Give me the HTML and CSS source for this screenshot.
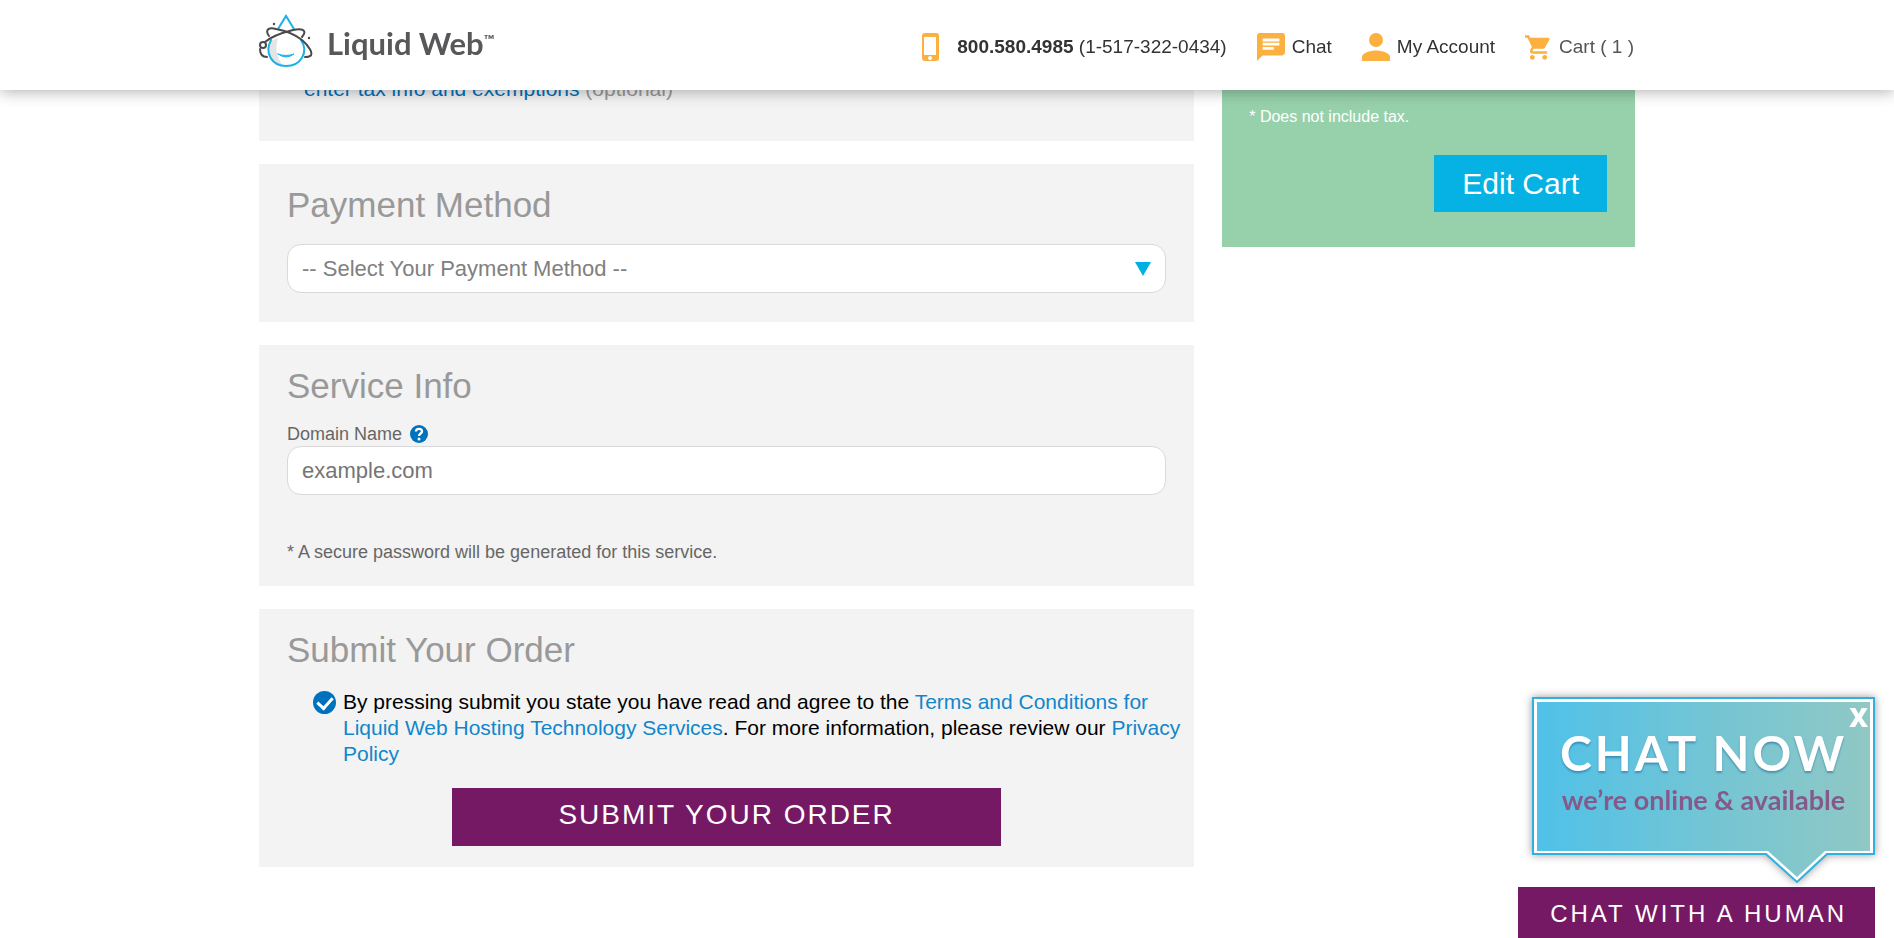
FILE: index.html
```
<!DOCTYPE html>
<html lang="en">
<head>
    <meta charset="UTF-8">
    <title>Liquid Web - Checkout</title>
    <link rel="stylesheet" href="styles.css">
</head>
<body>
    <header id="head">
        <div class="headMain">
            <a class="logo" href="#">
                <svg class="logoMark" viewBox="0 0 54 54" fill="none" stroke-linecap="round">
                    <path d="M12 27 C7 37 12 49 25 52 C17 44 16 34 19 24Z" fill="#e3e4e5"/>
                    <path d="M19 15 L27 2 L35 15" stroke="#1bb1e7" stroke-width="2"/>
                    <path d="M12 26 C5 39 13 52 27 52 C42 52 50 38 42 26" stroke="#1bb1e7" stroke-width="2"/>
                    <path d="M19 40 Q27 46 35 40 Q27 43 19 40Z" fill="#1bb1e7" stroke="#1bb1e7"/>
                    <path d="M10 22 C5 15 11 13 17 15 C28 17 38 22 43 26 C50 32 55 40 51 42 C50 43 48 43 46 43" stroke="#4a4a4c" stroke-width="2"/>
                    <path d="M6 28 C13 22 26 18 34 16 C43 14 49 16 43 23" stroke="#4a4a4c" stroke-width="2"/>
                    <path d="M1 35 C1 40 3 43 8 43" stroke="#4a4a4c" stroke-width="2"/>
                    <circle cx="4" cy="31" r="3" stroke="#4a4a4c" stroke-width="2" fill="#fff"/>
                    <circle cx="15" cy="10" r="1.200" fill="#4a4a4c"/>
                    <circle cx="50" cy="24" r="1.200" fill="#4a4a4c"/>
                </svg>
                <span class="logoText">Liquid Web<sup>™</sup></span>
            </a>
            <nav class="nav">
                <a class="phone" href="#">
                    <svg width="17" height="28" viewBox="0 0 17 28"><path fill="#fbb040" fill-rule="evenodd" d="M3 0h11a3 3 0 0 1 3 3v22a3 3 0 0 1-3 3H3a3 3 0 0 1-3-3V3a3 3 0 0 1 3-3zM2 4v18h12V4zM8 23a2 2 0 1 0 .1 0z"/></svg>
                    <span><b>800.580.4985</b> (1-517-322-0434)</span>
                </a>
                <a href="#">
                    <svg width="28" height="28" viewBox="2 2 20 20"><path fill="#fbb040" d="M20 2H4c-1.100 0-1.990.9-1.990 2L2 22l4-4h14c1.100 0 2-.9 2-2V4c0-1.100-.9-2-2-2zM6 9h12v2H6V9zm8 5H6v-2h8v2zm4-6H6V6h12v2z"/></svg>
                    <span>Chat</span>
                </a>
                <a href="#">
                    <svg width="28" height="28" viewBox="0 0 28 28"><circle cx="14" cy="7" r="7" fill="#fbb040"/><path fill="#fbb040" d="M0 28v-4c0-4 8-6.500 14-6.500s14 2.500 14 6.500v4z"/></svg>
                    <span>My Account</span>
                </a>
                <a class="cart" href="#">
                    <svg width="25" height="25" viewBox="1 2 20.300 20"><path fill="#fbb040" d="M7 18c-1.100 0-1.990.9-1.990 2S5.900 22 7 22s2-.9 2-2-.9-2-2-2zM1 2v2h2l3.600 7.590-1.350 2.450c-.16.28-.25.61-.25.96 0 1.100.9 2 2 2h12v-2H7.420c-.14 0-.25-.11-.25-.25l.03-.12.9-1.630h7.450c.75 0 1.410-.41 1.750-1.030l3.580-6.490c.08-.14.12-.31.12-.48 0-.55-.45-1-1-1H5.210l-.94-2H1zm16 16c-1.100 0-1.990.9-1.990 2s.89 2 1.990 2 2-.9 2-2-.9-2-2-2z"/></svg>
                    <span>Cart ( 1 )</span>
                </a>
            </nav>
        </div>
    </header>

    <div class="wrap">
        <main class="main">
            <section class="box boxTax">
                <p><a href="#">enter tax info and exemptions</a> (optional)</p>
            </section>

            <section class="box">
                <h2>Payment Method</h2>
                <div class="selectWrap">
                    <select class="field" aria-label="Payment Method">
                        <option>-- Select Your Payment Method --</option>
                    </select>
                </div>
            </section>

            <section class="box boxService">
                <h2>Service Info</h2>
                <div class="labelRow">
                    <label for="domain">Domain Name</label>
                    <button class="help" type="button" aria-label="Help">
                        <svg width="18" height="18" viewBox="0 0 18 18"><circle cx="9" cy="9" r="9" fill="#0071bc"/><path d="M6 6.500C6 3 12 3 12 6.500 12 8.500 9 8.500 9 11" fill="none" stroke="#fff" stroke-width="2.400"/><circle cx="9" cy="14" r="1.500" fill="#fff"/></svg>
                    </button>
                </div>
                <input class="field" id="domain" type="text" placeholder="example.com">
                <p class="note">* A secure password will be generated for this service.</p>
            </section>

            <section class="box boxSubmit">
                <h2>Submit Your Order</h2>
                <div class="terms">
                    <input type="checkbox" id="agree" checked>
                    <label for="agree">By pressing submit you state you have read and agree to the <a href="#">Terms and Conditions for Liquid Web Hosting Technology Services</a>. For more information, please review our <a href="#">Privacy Policy</a></label>
                </div>
                <button class="submit" type="button">SUBMIT YOUR ORDER</button>
            </section>
        </main>

        <aside class="side">
            <p>* per month</p>
            <p>* Does not include tax.</p>
            <button class="edit" type="button">Edit Cart</button>
        </aside>
    </div>

    <div class="chat">
        <div class="bubble">
            <svg class="bubbleShape" viewBox="0 0 343 187">
                <defs>
                    <linearGradient id="bubbleFill">
                        <stop offset="0" stop-color="#50c1e8"/>
                        <stop offset=".5" stop-color="#72c5d5"/>
                        <stop offset="1" stop-color="#90c8c4"/>
                    </linearGradient>
                </defs>
                <path d="M1 1H342V157H295L265 185L234 157H1Z" fill="#fff" stroke="#2fb0e0" stroke-width="2"/>
                <path d="M5 5H338V154H293L265 180L236 154H5Z" fill="url(#bubbleFill)"/>
            </svg>
            <button class="close" type="button" aria-label="Close">X</button>
            <p class="now">CHAT NOW</p>
            <p class="online">we’re online &amp; available</p>
        </div>
        <button class="human" type="button">CHAT WITH A HUMAN</button>
    </div>
</body>
</html>
```
FILE: styles.css
```
/* reset */
html,body,h2,p{margin: 0;padding: 0;}
*{box-sizing: border-box;}
body{
    background: #fff;
    color: #000;
    font: 21px/26px "Liberation Sans", Arial, sans-serif;
}
a{color: #1186cb;text-decoration: none;}
svg{display: block;flex: none;}
button{font-family: inherit;border: 0;padding: 0;cursor: pointer;}

/* header */
#head{
    position: fixed;
    z-index: 2;
    top: 0;
    left: 0;
    right: 0;
    background: #fff;
    box-shadow: 0 2px 14px rgba(0,0,0,.3);
}
#head .headMain{
    max-width: 1376px;
    height: 90px;
    margin: 0 auto;
    display: flex;
    justify-content: space-between;
}
#head .logo{
    display: flex;
    align-items: flex-start;
    gap: 14px;
    padding-top: 14px;
}
#head .logoMark{
    width: 54px;
    height: 54px;
}
#head .logoText{
    font: bold 31px/58px Lato, sans-serif;
    color: #58585b;
}
#head .logoText sup{
    font-size: 14px;
    line-height: 1px;
    vertical-align: 10px;
}
#head .nav{
    display: flex;
    align-items: center;
    gap: 30px;
    padding: 4px 1px 0 0;
    font-size: 19px;
}
#head .nav a{
    display: flex;
    align-items: center;
    gap: 7px;
    color: #333;
}
#head .nav .phone{gap: 18px;}
#head .nav .cart{gap: 9px;color: #555;}

/* columns */
.wrap{
    max-width: 1376px;
    margin: 0 auto;
    padding-top: 50px;
    display: flex;
    align-items: flex-start;
    gap: 28px;
}
.main{
    flex: 1;
    display: flex;
    flex-direction: column;
    gap: 23px;
}
.box{
    background: #f3f3f3;
    padding: 20px 28px 29px;
}
.box h2{
    font-size: 35px;
    font-weight: normal;
    line-height: 42px;
    color: #999;
}
.boxTax{
    padding: 26px 45px 39px;
    color: #999;
}
.boxTax a{color: #0071bc;}

/* fields */
.field{
    display: block;
    width: 100%;
    height: 49px;
    padding: 0 14px;
    border: 1px solid #d9d9d9;
    border-radius: 14px;
    background: #fff;
    color: #808080;
    font: 22px "Liberation Sans", Arial, sans-serif;
    appearance: none;
}
.field::placeholder{color: #757575;}
.selectWrap{
    position: relative;
    margin-top: 18px;
}
.selectWrap:after{
    content: "";
    position: absolute;
    top: 18px;
    right: 15px;
    border: 8px solid transparent;
    border-top: 14px solid #00b0e2;
    border-bottom: 0;
    pointer-events: none;
}
.labelRow{
    display: flex;
    align-items: center;
    gap: 8px;
    padding-top: 15px;
    font-size: 18px;
    line-height: 24px;
    color: #666;
}
.help{background: none;}
.note{
    margin-top: 44px;
    font-size: 18px;
    line-height: 26px;
    color: #666;
}

/* submit */
.boxService,
.boxSubmit{padding-bottom: 21px;}
.terms{
    display: flex;
    align-items: flex-start;
    gap: 7px;
    margin: 18px -20px 0 0;
    padding-left: 26px;
}
.terms input{
    appearance: none;
    flex: none;
    width: 23px;
    height: 23px;
    margin: 2px 0 0;
    border-radius: 50%;
    background: #0071bc;
    display: grid;
    place-items: center;
}
.terms input:checked:after{
    content: "";
    width: 7px;
    height: 12px;
    margin-bottom: 3px;
    border: solid #fff;
    border-width: 0 3px 3px 0;
    transform: rotate(42deg);
}
.submit{
    display: block;
    width: 62.5%;
    margin: 21px auto 0;
    padding: 11px 0 15px;
    background: #751965;
    color: #fff;
    font-size: 28px;
    line-height: 32px;
    letter-spacing: 2px;
}

/* cart summary */
.side{
    width: 30%;
    background: #97d1ac;
    padding: 14px 28px 35px 27px;
    color: #fff;
    font-size: 16px;
    line-height: 35px;
}
.edit{
    display: block;
    margin: 21px 0 0 auto;
    padding: 11px 28px;
    background: #05b2e3;
    color: #fff;
    font-size: 30px;
    line-height: 35px;
}

/* chat */
.chat{
    position: fixed;
    right: 19px;
    bottom: 0;
    display: flex;
    flex-direction: column;
    align-items: flex-end;
}
.bubble{
    position: relative;
    width: 343px;
    height: 190px;
    padding-top: 26px;
    text-align: center;
    color: #fff;
}
.bubbleShape{
    position: absolute;
    top: 0;
    left: 0;
    width: 343px;
    height: 187px;
    filter: drop-shadow(0 0 4px rgba(0,0,0,.4));
}
.close{
    position: absolute;
    top: 8px;
    right: 7px;
    background: none;
    color: #fff;
    font: 800 26px/24px "Open Sans", sans-serif;
}
.now{
    position: relative;
    font: bold 48px/60px Lato, sans-serif;
    letter-spacing: 3px;
    text-shadow: 0 2px 2px rgba(40,110,160,.6);
}
.online{
    position: relative;
    font: bold 27px/34px Lato, sans-serif;
    color: #845a8b;
}
.human{
    padding: 11px 28px 8px 32px;
    background: #751965;
    color: #fff;
    font-size: 24px;
    line-height: 32px;
    letter-spacing: 3px;
}
```
